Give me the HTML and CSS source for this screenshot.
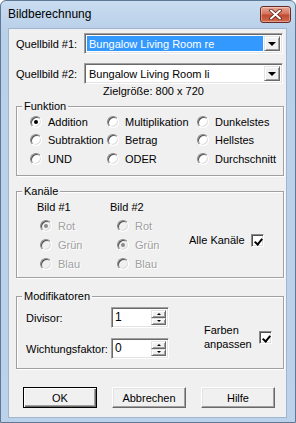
FILE: index.html
```html
<!DOCTYPE html>
<html lang="de">

<head>
  <meta charset="utf-8">
  <meta name="viewport" content="width=device-width, initial-scale=1.0">
  <title>Bildberechnung</title>
  <link rel="stylesheet" href="styles.css">
</head>

<body>
  <div class="window">
    <div class="titlebar">
      <span class="title">Bildberechnung</span>
      <div class="close">
        <svg width="13" height="11" viewBox="0 0 13 11">
          <path d="M2 1.5 L11 9.5 M11 1.5 L2 9.5" stroke="#5a1e14" stroke-width="3.6" stroke-linecap="round" />
          <path d="M2 1.5 L11 9.5 M11 1.5 L2 9.5" stroke="#fff" stroke-width="2" stroke-linecap="round" />
        </svg>
      </div>
    </div>

    <div class="client">
      <div class="source-row">
        <span class="source-label">Quellbild #1:</span>
        <div class="combo">
          <span class="combo-text selected">Bungalow Living Room re</span>
          <span class="combo-button"><span class="arrow"></span></span>
        </div>
      </div>
      <div class="source-row second">
        <span class="source-label">Quellbild #2:</span>
        <div class="combo">
          <span class="combo-text">Bungalow Living Room li</span>
          <span class="combo-button"><span class="arrow"></span></span>
        </div>
      </div>
      <div class="target-size">Zielgröße: 800 x 720</div>

      <div class="group funktion">
        <span class="group-title">Funktion</span>
        <div class="function-grid">
          <label class="radio-item"><span class="radio checked"></span>Addition</label>
          <label class="radio-item"><span class="radio"></span>Multiplikation</label>
          <label class="radio-item"><span class="radio"></span>Dunkelstes</label>
          <label class="radio-item"><span class="radio"></span>Subtraktion</label>
          <label class="radio-item"><span class="radio"></span>Betrag</label>
          <label class="radio-item"><span class="radio"></span>Hellstes</label>
          <label class="radio-item"><span class="radio"></span>UND</label>
          <label class="radio-item"><span class="radio"></span>ODER</label>
          <label class="radio-item"><span class="radio"></span>Durchschnitt</label>
        </div>
      </div>

      <div class="group kanaele">
        <span class="group-title">Kanäle</span>
        <div class="channel-col first">
          <div class="channel-head">Bild #1</div>
          <div class="channel-list">
            <label class="radio-item disabled"><span class="radio checked"></span>Rot</label>
            <label class="radio-item disabled"><span class="radio"></span>Grün</label>
            <label class="radio-item disabled"><span class="radio"></span>Blau</label>
          </div>
        </div>
        <div class="channel-col second">
          <div class="channel-head">Bild #2</div>
          <div class="channel-list">
            <label class="radio-item disabled"><span class="radio"></span>Rot</label>
            <label class="radio-item disabled"><span class="radio checked"></span>Grün</label>
            <label class="radio-item disabled"><span class="radio"></span>Blau</label>
          </div>
        </div>
        <label class="all-channels">Alle Kanäle <span class="checkbox checked"></span></label>
      </div>

      <div class="group modifikatoren">
        <span class="group-title">Modifikatoren</span>
        <div class="mod-fields">
          <div class="mod-row">
            <span class="mod-label">Divisor:</span>
            <div class="spin">
              <span class="spin-text">1</span>
              <span class="spin-buttons">
                <span class="spin-btn"><span class="up"></span></span>
                <span class="spin-btn"><span class="down"></span></span>
              </span>
            </div>
          </div>
          <div class="mod-row">
            <span class="mod-label">Wichtungsfaktor:</span>
            <div class="spin">
              <span class="spin-text">0</span>
              <span class="spin-buttons">
                <span class="spin-btn"><span class="up"></span></span>
                <span class="spin-btn"><span class="down"></span></span>
              </span>
            </div>
          </div>
        </div>
        <label class="adjust-colors">
          <span class="adjust-text">Farben<br>anpassen</span>
          <span class="checkbox checked"></span>
        </label>
      </div>

      <div class="buttons">
        <button class="btn default">OK</button>
        <button class="btn">Abbrechen</button>
        <button class="btn">Hilfe</button>
      </div>
    </div>
  </div>
</body>

</html>
```

FILE: styles.css
```css
* {
  box-sizing: border-box;
}

body {
  margin: 0;
  width: 296px;
  height: 423px;
  overflow: hidden;
  font-family: "Liberation Sans", Arial, sans-serif;
  font-size: 11px;
  color: #000;
  background: #fff;
}

.window {
  width: 296px;
  height: 423px;
  padding: 0 8px 5px 7px;
  border: 1px solid #5f7896;
  border-radius: 6px 6px 0 0;
  background: linear-gradient(#c9dcf0, #b9d0e9 30px, #bcd2ea);
}

.titlebar {
  display: flex;
  align-items: center;
  justify-content: space-between;
  height: 27px;
  padding-bottom: 1px;
}

.title {
  font-size: 12px;
  line-height: 14px;
  margin-left: 0;
}

.close {
  display: flex;
  align-items: center;
  justify-content: center;
  width: 31px;
  height: 17px;
  margin-right: -4px;
  margin-top: 1px;
  border: 1px solid #6a2b22;
  border-radius: 3px;
  background: linear-gradient(#e8a896, #d6735e 45%, #c24a33 55%, #d36b4f);
  box-shadow: inset 0 0 0 1px rgba(255, 255, 255, 0.35);
}

.client {
  height: 390px;
  padding: 4px 0 0 7px;
  background: #f0f0f0;
  border: 1px solid #9fb6d1;
}

.source-row {
  display: flex;
  align-items: center;
  height: 21px;
}

.source-row.second {
  margin-top: 9px;
}

.source-label {
  width: 68px;
}

.combo {
  display: flex;
  align-items: stretch;
  width: 199px;
  height: 21px;
  padding: 2px;
  background: #fff;
  border: 1px solid;
  border-color: #a0a0a0 #fff #fff #a0a0a0;
  box-shadow: inset 1px 1px #696969, inset -1px -1px #e3e3e3;
}

.combo-text {
  flex: 1;
  display: flex;
  align-items: center;
  padding-left: 2px;
  margin-right: 1px;
}

.combo-text.selected {
  background: #3399ff;
  color: #fff;
}

.combo-button,
.spin-btn {
  display: flex;
  align-items: center;
  justify-content: center;
  background: #f0f0f0;
  border: 1px solid;
  border-color: #e3e3e3 #696969 #696969 #e3e3e3;
  box-shadow: inset 1px 1px #fff, inset -1px -1px #a0a0a0;
}

.combo-button {
  width: 16px;
}

.arrow {
  width: 0;
  height: 0;
  border-left: 4px solid transparent;
  border-right: 4px solid transparent;
  border-top: 4px solid #000;
  margin-top: 1px;
}

.target-size {
  margin-top: 1px;
  padding-left: 87px;
  line-height: 13px;
  height: 13px;
}

.group {
  position: relative;
  width: 268px;
  border: 1px solid #a0a0a0;
  box-shadow: 1px 1px 0 #fff, inset 1px 1px 0 #fff;
}

.group-title {
  position: absolute;
  top: -7px;
  left: 5px;
  padding: 0 2px;
  line-height: 13px;
  background: #f0f0f0;
}

.funktion {
  margin-top: 8px;
  height: 70px;
  padding: 6px 0 0 13px;
}

.function-grid {
  display: grid;
  grid-template-columns: 77px 90px 1fr;
  grid-template-rows: 18px 18px 19px;
}

.radio-item {
  display: flex;
  align-items: center;
  gap: 6px;
  white-space: nowrap;
}

.radio {
  position: relative;
  flex: none;
  width: 12px;
  height: 12px;
  border-radius: 50%;
  background: #fff;
  border: 1px solid;
  border-color: #8a8a8a #fff #fff #8a8a8a;
  box-shadow: inset 1px 1px #505050, inset -1px -1px #dcdcdc;
}

.radio.checked::after {
  content: "";
  position: absolute;
  left: 3px;
  top: 3px;
  width: 4px;
  height: 4px;
  border-radius: 50%;
  background: #000;
}

.disabled {
  color: #a0a0a0;
  text-shadow: 1px 1px 0 #fff;
}

.disabled .radio {
  background: #f0f0f0;
}

.disabled .radio.checked::after {
  background: #8a8a8a;
}

.kanaele {
  display: flex;
  margin-top: 15px;
  height: 87px;
  padding: 6px 0 0 20px;
}

.channel-col.first {
  width: 73px;
}

.channel-col.second {
  width: 79px;
}

.channel-head {
  line-height: 18px;
}

.channel-list .radio-item {
  height: 19px;
}

.channel-col.first .channel-list {
  padding-left: 3px;
}

.channel-col.second .channel-list {
  padding-left: 7px;
}

.all-channels {
  display: flex;
  align-items: center;
  gap: 6px;
  height: 14px;
  margin-top: 35px;
}

.checkbox {
  position: relative;
  flex: none;
  width: 13px;
  height: 13px;
  background: #fff;
  border: 1px solid;
  border-color: #8a8a8a #fff #fff #8a8a8a;
  box-shadow: inset 1px 1px #505050, inset -1px -1px #dcdcdc;
}

.checkbox.checked::after {
  content: "";
  position: absolute;
  left: 3px;
  top: 2px;
  width: 3px;
  height: 6px;
  border: solid #000;
  border-width: 0 2px 2px 0;
  transform: rotate(40deg);
  transform-origin: center;
  left: 4px;
}

.modifikatoren {
  display: flex;
  margin-top: 18px;
  height: 73px;
  padding: 10px 0 0 9px;
}

.mod-fields {
  display: flex;
  flex-direction: column;
  gap: 10px;
  width: 178px;
}

.mod-row {
  display: flex;
  align-items: center;
  height: 21px;
}

.mod-label {
  width: 85px;
}

.spin {
  display: flex;
  width: 58px;
  height: 21px;
  padding: 2px;
  background: #fff;
  border: 1px solid;
  border-color: #a0a0a0 #fff #fff #a0a0a0;
  box-shadow: inset 1px 1px #696969, inset -1px -1px #e3e3e3;
}

.spin-text {
  flex: 1;
  font-size: 12px;
  line-height: 15px;
  padding-left: 1px;
}

.spin-buttons {
  display: flex;
  flex-direction: column;
  width: 15px;
}

.spin-btn {
  flex: 1;
}

.up,
.down {
  width: 0;
  height: 0;
  border-left: 2px solid transparent;
  border-right: 2px solid transparent;
}

.up {
  border-bottom: 2px solid #000;
}

.down {
  border-top: 2px solid #000;
}

.adjust-colors {
  display: flex;
  align-items: center;
  gap: 7px;
  margin-top: 16px;
  height: 28px;
}

.adjust-text {
  line-height: 14px;
}

.buttons {
  display: flex;
  gap: 15px;
  margin-top: 18px;
  padding-left: 7px;
}

.btn {
  width: 74px;
  height: 21px;
  padding: 0;
  font-family: "Liberation Sans", Arial, sans-serif;
  font-size: 11px;
  color: #000;
  background: #f0f0f0;
  border: 1px solid;
  border-color: #fff #696969 #696969 #fff;
  box-shadow: inset -1px -1px #a0a0a0, inset 1px 1px #e3e3e3;
}

.btn.default {
  border: 1px solid #000;
  box-shadow: inset 1px 1px #fff, inset -1px -1px #696969, inset -2px -2px #a0a0a0;
}
```
